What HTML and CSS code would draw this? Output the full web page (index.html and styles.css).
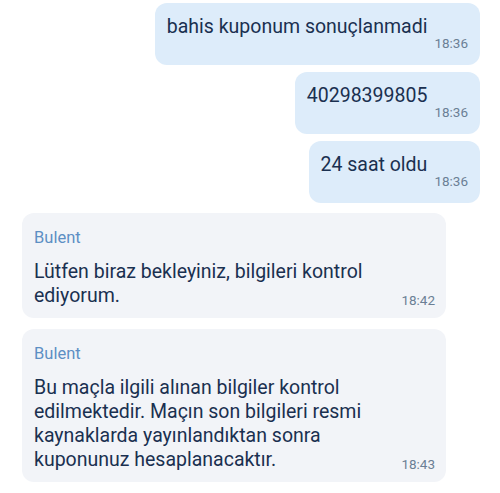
FILE: index.html
```html
<!DOCTYPE html>
<html lang="tr">
<head>
<meta charset="utf-8">
<link rel="stylesheet" href="styles.css">
</head>
<body>
<div class="chat">
  <div class="msg out">
    <span class="text">bahis kuponum sonuçlanmadi</span>
    <span class="time">18:36</span>
  </div>
  <div class="msg out">
    <span class="text">40298399805</span>
    <span class="time">18:36</span>
  </div>
  <div class="msg out">
    <span class="text">24 saat oldu</span>
    <span class="time">18:36</span>
  </div>
  <div class="msg in first">
    <div class="name">Bulent</div>
    <div class="body">
      <span class="text">Lütfen biraz bekleyiniz, bilgileri kontrol ediyorum.</span>
      <span class="time">18:42</span>
    </div>
  </div>
  <div class="msg in">
    <div class="name">Bulent</div>
    <div class="body">
      <span class="text">Bu maçla ilgili alınan bilgiler kontrol edilmektedir. Maçın son bilgileri resmi kaynaklarda yayınlandıktan sonra kuponunuz hesaplanacaktır.</span>
      <span class="time">18:43</span>
    </div>
  </div>
</div>
</body>
</html>
```
FILE: styles.css
```css
html, body {
  margin: 0;
  padding: 0;
  background: #ffffff;
}
body {
  font-family: Roboto, "Noto Sans", sans-serif;
  color: #1a3050;
}
.chat {
  display: flex;
  flex-direction: column;
  padding: 3px 20px 0 22px;
}
.msg {
  border-radius: 12px;
  box-sizing: border-box;
}
.out {
  align-self: flex-end;
  display: flex;
  align-items: flex-end;
  gap: 7px;
  background: #ddecfa;
  padding: 12px 12px 14px 12px;
  margin-bottom: 7px;
}
.out .text {
  font-size: 19.5px;
  line-height: 24px;
  margin-bottom: 12px;
}
.time {
  font-size: 13.5px;
  line-height: 16px;
  color: #6b7f95;
  white-space: nowrap;
}
.in {
  align-self: flex-start;
  width: 424px;
  background: #f2f4f8;
  padding: 14px 11px 10px 12px;
}
.in.first {
  margin-top: 3px;
  margin-bottom: 11px;
}
.name {
  font-size: 16.5px;
  line-height: 22px;
  color: #5d8fc4;
  margin-bottom: 11px;
}
.body {
  display: flex;
  align-items: flex-end;
  justify-content: space-between;
  gap: 30px;
}
.in .text {
  font-size: 19.5px;
  line-height: 24px;
}
```
